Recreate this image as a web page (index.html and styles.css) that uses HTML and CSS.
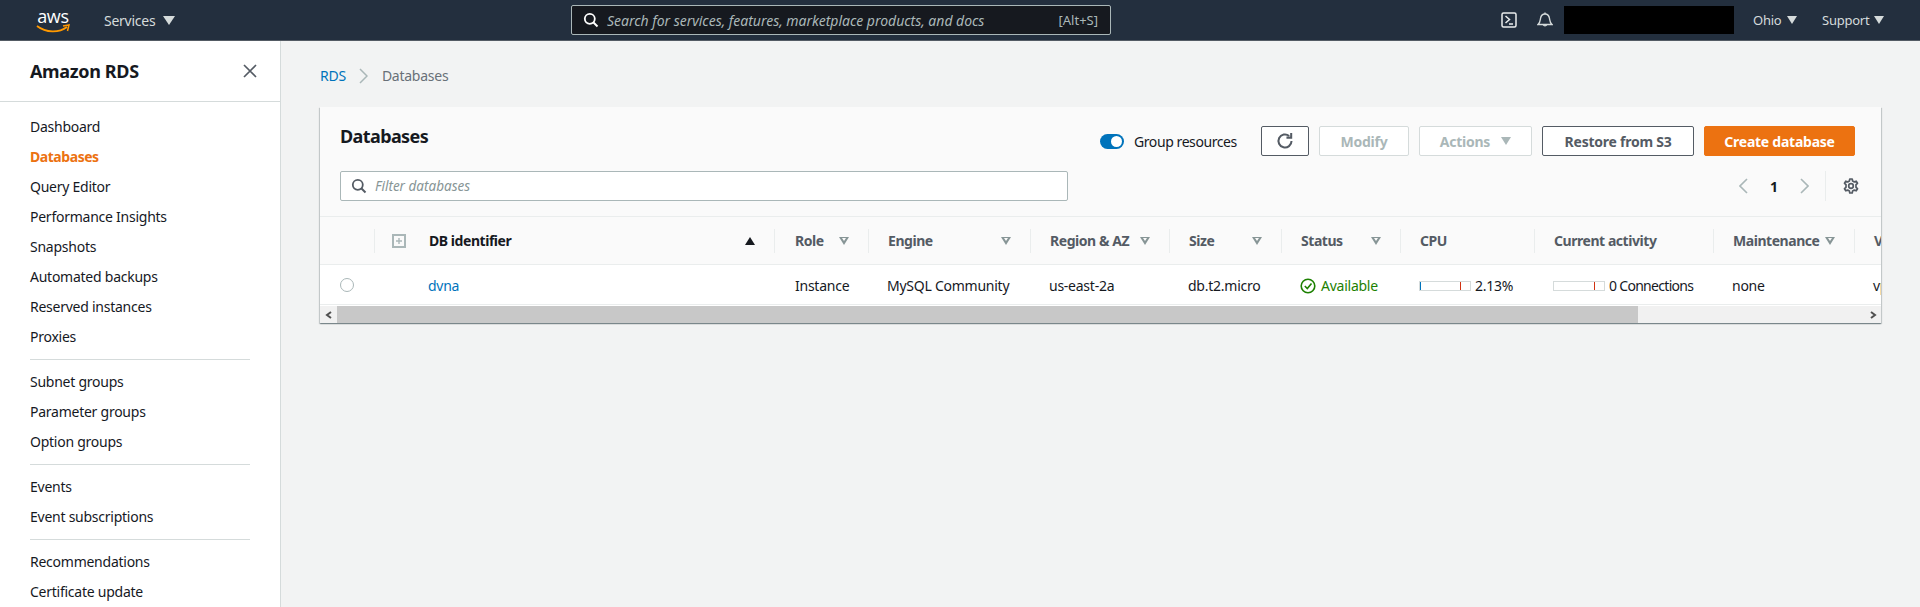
FILE: index.html
```html
<!DOCTYPE html>
<html lang="en">
<head>
<meta charset="utf-8">
<title>RDS Databases</title>
<link rel="stylesheet" href="styles.css">
</head>
<body>
<header class="topbar">
  <a class="logo"><span class="logo-text">aws</span>
    <svg class="logo-smile" viewBox="0 0 34 10" width="34" height="10"><path d="M1 2 C10 9 23 9 31 3" fill="none" stroke="#f90" stroke-width="1.8"/><path d="M27 2 L33 1 L31.500 7" fill="none" stroke="#f90" stroke-width="1.500"/></svg>
  </a>
  <span class="services">Services</span><i class="caret caret-lg"></i>
  <div class="search">
    <svg class="search-icon" viewBox="0 0 16 16" width="16" height="16"><circle cx="6.800" cy="6.800" r="5" fill="none" stroke="#fff" stroke-width="1.800"/><path d="M10.500 10.500 L14.500 14.500" stroke="#fff" stroke-width="2"/></svg>
    <span class="search-text">Search for services, features, marketplace products, and docs</span>
    <span class="search-key">[Alt+S]</span>
  </div>
  <div class="top-right">
    <svg class="term" viewBox="0 0 16 16" width="16" height="16"><rect x="1" y="1" width="14" height="14" rx="1.500" fill="none" stroke="#eaeded" stroke-width="1.500"/><path d="M4.500 4 L8.500 7.500 L4.500 11 M8 12 H12" fill="none" stroke="#eaeded" stroke-width="1.500"/></svg>
    <svg class="bell" viewBox="0 0 16 16" width="16" height="16"><path d="M1 12.500 H15 C12.800 10.500 12.800 8.500 12.500 6.500 C12 3.500 10.500 2 8 2 C5.500 2 4 3.500 3.500 6.500 C3.200 8.500 3.200 10.500 1 12.500 Z" fill="none" stroke="#d5dbdb" stroke-width="1.400"/><path d="M6.300 12.800 A1.900 1.900 0 0 0 9.700 12.800" fill="none" stroke="#d5dbdb" stroke-width="1.400"/><path d="M8 0.500 V2" stroke="#d5dbdb" stroke-width="1.400"/></svg>
    <div class="redacted"></div>
    <span class="top-link ohio">Ohio</span><i class="caret"></i>
    <span class="top-link support">Support</span><i class="caret"></i>
  </div>
</header>
<div class="layout">
  <aside class="sidebar">
    <div class="side-head">
      <span class="side-title">Amazon RDS</span>
      <svg class="close" viewBox="0 0 14 14" width="14" height="14"><path d="M1 1 L13 13 M13 1 L1 13" stroke="#545b64" stroke-width="1.700"/></svg>
    </div>
    <nav class="side-nav">
      <ul class="nav-group">
        <li>Dashboard</li>
        <li class="active">Databases</li>
        <li>Query Editor</li>
        <li>Performance Insights</li>
        <li>Snapshots</li>
        <li>Automated backups</li>
        <li>Reserved instances</li>
        <li>Proxies</li>
      </ul>
      <ul class="nav-group">
        <li>Subnet groups</li>
        <li>Parameter groups</li>
        <li>Option groups</li>
      </ul>
      <ul class="nav-group">
        <li>Events</li>
        <li>Event subscriptions</li>
      </ul>
      <ul class="nav-group">
        <li>Recommendations</li>
        <li>Certificate update</li>
      </ul>
    </nav>
  </aside>
  <main class="main">
    <div class="crumbs">
      <a class="link">RDS</a>
      <svg class="crumb-sep" viewBox="0 0 9 16" width="9" height="16"><path d="M1 1 L8 8 L1 15" fill="none" stroke="#aab7b8" stroke-width="1.500"/></svg>
      <span class="crumb-cur">Databases</span>
    </div>
    <section class="card">
      <div class="card-head">
        <div class="head-row">
          <h1 class="card-title">Databases</h1>
          <span class="toggle"><span class="knob"></span></span>
          <span class="toggle-label">Group resources</span>
          <button class="btn btn-refresh">
            <svg viewBox="0 0 16 16" width="18" height="18"><path d="M13.800 8 A5.800 5.800 0 1 1 11.700 3.500" fill="none" stroke="#545b64" stroke-width="1.800"/><path d="M13.500 0.800 V5 H9.300" fill="none" stroke="#545b64" stroke-width="1.800"/></svg>
          </button>
          <button class="btn btn-disabled btn-modify">Modify</button>
          <button class="btn btn-disabled btn-actions">Actions<i class="caret caret-grey"></i></button>
          <button class="btn btn-restore">Restore from S3</button>
          <button class="btn btn-primary">Create database</button>
        </div>
        <div class="head-row filter-row">
          <div class="filter">
            <svg viewBox="0 0 16 16" width="16" height="16"><circle cx="6.800" cy="6.800" r="5" fill="none" stroke="#545b64" stroke-width="1.800"/><path d="M10.500 10.500 L14.500 14.500" stroke="#545b64" stroke-width="2"/></svg>
            <span class="filter-text">Filter databases</span>
          </div>
          <div class="pager">
            <svg viewBox="0 0 9 16" width="9" height="16"><path d="M8 1 L1 8 L8 15" fill="none" stroke="#aab7b8" stroke-width="1.600"/></svg>
            <span class="page-num">1</span>
            <svg viewBox="0 0 9 16" width="9" height="16"><path d="M1 1 L8 8 L1 15" fill="none" stroke="#aab7b8" stroke-width="1.600"/></svg>
            <span class="pager-gear">
              <svg viewBox="0 0 16 16" width="16" height="16"><circle cx="8" cy="8" r="2.300" fill="none" stroke="#545b64" stroke-width="1.700"/><path d="M6.800 1 H9.200 L9.600 3 L11.300 3.900 L13.200 3.200 L14.500 5.300 L13 6.700 V9.300 L14.500 10.700 L13.200 12.800 L11.300 12.100 L9.600 13 L9.200 15 H6.800 L6.400 13 L4.700 12.100 L2.800 12.800 L1.500 10.700 L3 9.300 V6.700 L1.500 5.300 L2.800 3.200 L4.700 3.900 L6.400 3 Z" fill="none" stroke="#545b64" stroke-width="1.700" stroke-linejoin="round"/></svg>
            </span>
          </div>
        </div>
      </div>
      <div class="table">
        <div class="grid thead">
          <div class="th th-first"></div>
          <div class="th th-id">
            <svg class="expand" viewBox="0 0 14 14" width="14" height="14"><rect x="1" y="1" width="12" height="12" fill="none" stroke="#aab7b8" stroke-width="2"/><path d="M4 7 H10 M7 4 V10" stroke="#aab7b8" stroke-width="1.400"/></svg>
            <span class="th-strong">DB identifier</span><i class="tri-up"></i>
          </div>
          <div class="th th-role"><span>Role</span><i class="tri-down"></i></div>
          <div class="th"><span>Engine</span><i class="tri-down"></i></div>
          <div class="th"><span>Region &amp; AZ</span><i class="tri-down"></i></div>
          <div class="th"><span>Size</span><i class="tri-down"></i></div>
          <div class="th"><span>Status</span><i class="tri-down"></i></div>
          <div class="th"><span>CPU</span></div>
          <div class="th"><span>Current activity</span></div>
          <div class="th"><span>Maintenance</span><i class="tri-down"></i></div>
          <div class="th"><span>VPC</span></div>
        </div>
        <div class="grid tbody">
          <div class="td td-radio"><span class="radio"></span></div>
          <div class="td td-id"><a class="link">dvna</a></div>
          <div class="td td-role">Instance</div>
          <div class="td">MySQL Community</div>
          <div class="td">us-east-2a</div>
          <div class="td">db.t2.micro</div>
          <div class="td td-status">
            <svg viewBox="0 0 16 16" width="16" height="16"><circle cx="8" cy="8" r="6.800" fill="none" stroke="#1d8102" stroke-width="1.600"/><path d="M4.800 8 L7.300 10.500 L11.500 5.600" fill="none" stroke="#1d8102" stroke-width="1.600"/></svg>
            <span>Available</span>
          </div>
          <div class="td"><span class="meter"><span class="meter-val" style="width:2.13%"></span><span class="meter-mark"></span></span>2.13%</div>
          <div class="td td-conn"><span class="meter"><span class="meter-mark"></span></span>0 Connections</div>
          <div class="td">none</div>
          <div class="td">vpc-0a1</div>
        </div>
      </div>
      <div class="scrollbar">
        <span class="sb-btn"><svg viewBox="0 0 8 8" width="8" height="8"><path d="M6 1 L2 4 L6 7" fill="none" stroke="#505050" stroke-width="2"/></svg></span>
        <span class="sb-thumb"></span>
        <span class="sb-btn"><svg viewBox="0 0 8 8" width="8" height="8"><path d="M2 1 L6 4 L2 7" fill="none" stroke="#505050" stroke-width="2"/></svg></span>
      </div>
    </section>
  </main>
</div>
</body>
</html>
```
FILE: styles.css
```css
* { box-sizing: border-box; }
html, body { margin: 0; height: 607px; overflow: hidden; }
body { font-family: "Noto Sans", "Liberation Sans", sans-serif; font-size: 14px; letter-spacing: -0.25px; color: #16191f; background: #f2f3f3; }
ul { list-style: none; margin: 0; padding: 0; }
.link { color: #0073bb; }
.caret { display: inline-block; width: 0; height: 0; border-left: 5px solid transparent; border-right: 5px solid transparent; border-top: 8px solid #d5dbdb; }
.topbar { height: 41px; background: #232f3e; border-bottom: 1px solid #545b64; display: flex; align-items: center; padding-left: 36px; color: #d5dbdb; font-size: 13px; }
.logo { width: 34px; height: 30px; position: relative; display: block; }
.logo-text { display: block; font-family: "Open Sans", sans-serif; font-size: 18px; line-height: 18px; color: #fff; text-align: center; margin-top: 2px; letter-spacing: -0.3px; }
.logo-smile { display: block; margin-top: -1px; }
.services { margin-left: 34px; font-size: 14px; width: 55px; }
.caret-lg { margin-left: 4px; border-left-width: 6px; border-right-width: 6px; border-top-width: 9px; }
.search { margin-left: 396px; width: 540px; height: 30px; background: #16191f; border: 1px solid #aab7b8; border-radius: 2px; display: flex; align-items: center; padding: 0 11px; color: #aab7b8; }
.search-text { margin-left: 8px; font-style: italic; font-size: 14px; letter-spacing: -0.02px; flex: 1; white-space: nowrap; }
.search-key { font-size: 13px; margin-right: 1px; letter-spacing: 0; }
.top-right { margin-left: auto; display: flex; align-items: center; padding-right: 36px; }
.bell { margin-left: 20px; }
.redacted { width: 170px; height: 28px; background: #000; margin-left: 11px; }
.top-link { white-space: nowrap; }
.ohio { margin-left: 19px; margin-right: 8px; width: 26px; }
.support { margin-left: 25px; margin-right: 8px; width: 44px; }
.layout { display: flex; height: 566px; }
.sidebar { width: 281px; flex: none; background: #fff; border-right: 1px solid #d5dbdb; overflow: hidden; }
.side-head { height: 61px; border-bottom: 1px solid #d5dbdb; display: flex; align-items: center; justify-content: space-between; padding: 0 23px 0 30px; }
.side-title { font-size: 18px; font-weight: 700; letter-spacing: -0.35px; }
.side-nav { padding-top: 10px; }
.nav-group { margin: 0 30px 7px; padding-bottom: 7px; border-bottom: 1px solid #d5dbdb; }
.nav-group:last-child { border-bottom: 0; }
.nav-group li { margin-left: 0; height: 30px; line-height: 30px; white-space: nowrap; }
.nav-group .active { color: #ec7211; font-weight: 700; letter-spacing: -0.45px; }
.main { flex: 1; min-width: 0; padding: 25px 39px 0; }
.crumbs { height: 20px; line-height: 20px; display: flex; align-items: center; margin-bottom: 21px; }
.crumb-sep { margin: 0 14px 0 13px; }
.crumb-cur { color: #687078; }
.card { background: #fff; box-shadow: 0 1px 1px 0 rgba(0,28,36,.3), 1px 1px 1px 0 rgba(0,28,36,.15), -1px 1px 1px 0 rgba(0,28,36,.15); }
.card-head { background: #fafafa; padding: 19px 26px 15px 20px; border-bottom: 1px solid #eaeded; height: 110px; }
.head-row { display: flex; align-items: center; height: 30px; }
.filter-row { margin-top: 15px; margin-right: -4px; justify-content: space-between; }
.card-title { margin: 0 auto 0 0; font-size: 18px; font-weight: 700; line-height: 22px; position: relative; top: -5px; letter-spacing: -0.6px; }
.toggle { width: 24px; height: 15px; border-radius: 8px; background: #0073bb; display: flex; align-items: center; justify-content: flex-end; padding-right: 2px; }
.knob { width: 11px; height: 11px; border-radius: 50%; background: #fff; }
.toggle-label { margin: 0 25px 0 10px; width: 102px; white-space: nowrap; letter-spacing: -0.42px; }
.btn { height: 30px; font-family: inherit; font-size: 14px; font-weight: 700; border-radius: 2px; background: #fff; padding: 0; margin-left: 10px; display: flex; align-items: center; justify-content: center; letter-spacing: -0.25px; }
.btn:first-of-type { margin-left: 0; }
.btn-refresh { width: 48px; border: 1px solid #545b64; }
.btn-disabled { border: 1px solid #d5dbdb; color: #aab7b8; }
.btn-modify { width: 90px; }
.btn-actions { width: 113px; }
.caret-grey { margin-left: 11px; border-top-color: #aab7b8; }
.btn-restore { width: 152px; border: 1px solid #545b64; color: #545b64; }
.btn-primary { width: 151px; border: 1px solid #ec7211; background: #ec7211; color: #fff; }
.filter { width: 728px; height: 30px; background: #fff; border: 1px solid #aab7b8; border-radius: 2px; display: flex; align-items: center; padding-left: 10px; }
.filter-text { margin-left: 8px; color: #879596; font-style: italic; font-size: 13.5px; letter-spacing: 0; }
.pager { display: flex; align-items: center; }
.page-num { width: 52px; text-align: center; font-weight: 700; }
.pager-gear { margin-left: 16px; border-left: 1px solid #eaeded; height: 30px; padding-left: 17px; display: flex; align-items: center; }
.table { overflow: hidden; }
.grid { display: grid; grid-template-columns: 54px 400px 94px 162px 139px 112px 119px 134px 179px 141px 120px; width: 1654px; }
.thead { height: 48px; background: #fafafa; border-bottom: 1px solid #eaeded; align-items: center; }
.th { height: 24px; border-left: 1px solid #eaeded; display: flex; align-items: center; justify-content: space-between; padding: 0 19px 0 19px; color: #545b64; font-weight: 700; white-space: nowrap; letter-spacing: -0.45px; }
.th-first { border-left: 0; }
.th-id { padding-left: 17px; }
.th-role { padding-left: 20px; }
.expand { margin-right: 23px; flex: none; }
.th-strong { color: #16191f; margin-right: auto; }
.tri-down { display: block; width: 0; height: 0; border-left: 5px solid transparent; border-right: 5px solid transparent; border-top: 8px solid #879596; position: relative; flex: none; }
.tri-down::after { content: ""; position: absolute; left: -2.5px; top: -6.500px; width: 0; height: 0; border-left: 2.5px solid transparent; border-right: 2.5px solid transparent; border-top: 3.500px solid #fafafa; }
.tri-up { display: block; width: 0; height: 0; border-left: 5px solid transparent; border-right: 5px solid transparent; border-bottom: 8px solid #16191f; }
.tbody { height: 40px; border-bottom: 1px solid #eaeded; background: #fff; align-items: center; }
.td { padding: 2px 0 0 19px; white-space: nowrap; display: flex; align-items: center; }
.td-role { padding-left: 21px; }
.td-radio { padding-left: 20px; }
.td-conn { letter-spacing: -0.7px; }
.radio { width: 14px; height: 14px; border-radius: 50%; border: 1px solid #aab7b8; background: #fff; margin-top: -2px; }
.td-id { padding-left: 54px; }
.td-status { color: #1d8102; }
.td-status svg { margin-right: 5px; }
.meter { display: block; position: relative; width: 52px; height: 10px; border: 1px solid #d5dbdb; background: #fff; margin-right: 4px; flex: none; }
.meter-val { display: block; height: 100%; background: #0073bb; }
.meter-mark { position: absolute; left: 40px; top: 0; bottom: 0; width: 1px; background: #d13212; }
.scrollbar { height: 17px; margin-top: 1px; background: #f1f1f1; display: flex; align-items: stretch; }
.sb-btn { width: 17px; flex: none; display: flex; align-items: center; justify-content: center; }
.sb-thumb { width: 1301px; background: #c8c8c8; margin-right: auto; }
```
